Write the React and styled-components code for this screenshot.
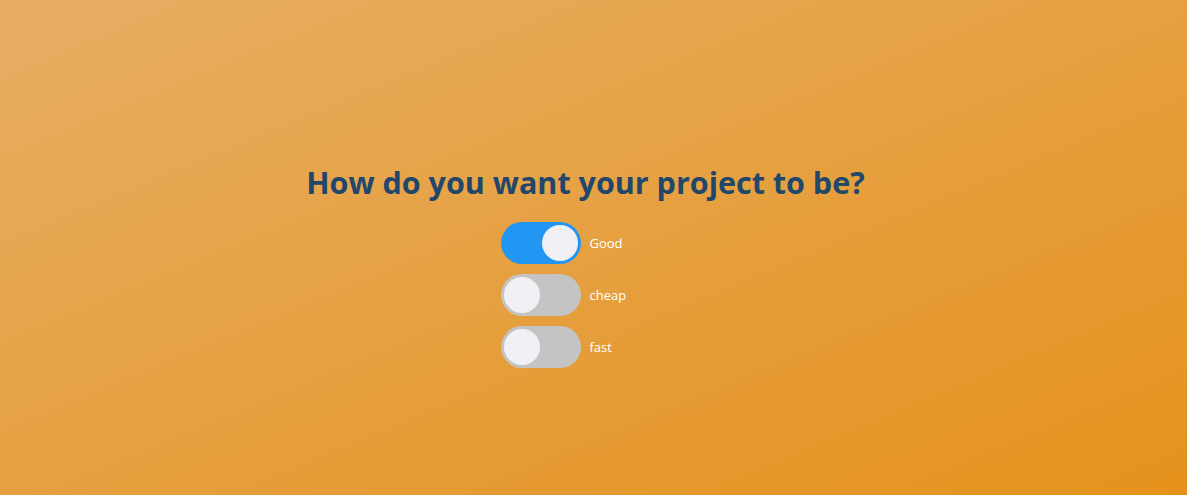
import React, { useState } from "react";
import styled, { createGlobalStyle } from "styled-components";

const GlobalStyle = createGlobalStyle`
  html, body {
    margin: 0;
    padding: 0;
  }
  body {
    font-family: "Open Sans", "Noto Sans", sans-serif;
  }
`;

const options = [
    { name: 'Good', checked: true },
    { name: 'cheap', checked: false },
    { name: 'fast', checked: false }
];

const App = () => {
    const [items, setItems] = useState(options);

    const toggle = (index) => {
        setItems(items.map((item, i) => i === index ? { ...item, checked: !item.checked } : item));
    };

    return (
        <>
            <GlobalStyle/>
            <Page>
                <Title>How do you want your project to be?</Title>
                <List>
                    { items.map((item, index) =>
                        <Row key={ index }>
                            <Track checked={ item.checked } onClick={ () => toggle(index) }>
                                <Knob checked={ item.checked }/>
                            </Track>
                            <Label>{ item.name }</Label>
                        </Row>
                    )}
                </List>
            </Page>
        </>
    );
};

const Page = styled.div`
  width: 100%;
  height: 495px;
  box-sizing: border-box;
  padding-top: 162px;
  background: linear-gradient(to bottom right, #e7ae64, #e5921c);
  display: flex;
  flex-direction: column;
  align-items: center;
`;

const Title = styled.h1`
  margin: 0 16px 20px 0;
  font-size: 30.5px;
  font-weight: 700;
  line-height: 40px;
  color: #22476a;
`;

const List = styled.div`
  width: 186px;
  display: flex;
  flex-direction: column;
  gap: 10px;
`;

const Row = styled.div`
  display: flex;
  align-items: center;
  gap: 9px;
`;

const Track = styled.div`
  position: relative;
  width: 80px;
  height: 42px;
  box-sizing: border-box;
  border-radius: 21px;
  background: ${ props => props.checked ? '#2196f3' : '#c4c4c4' };
  cursor: pointer;
  transition: background .2s ease;
`;

const Knob = styled.div`
  position: absolute;
  top: 3px;
  left: ${ props => props.checked ? '41px' : '3px' };
  width: 36px;
  height: 36px;
  border-radius: 50%;
  background: #f1f1f5;
  transition: left .2s ease;
`;

const Label = styled.span`
  color: #fff;
  font-size: 13px;
`;

export default App;
